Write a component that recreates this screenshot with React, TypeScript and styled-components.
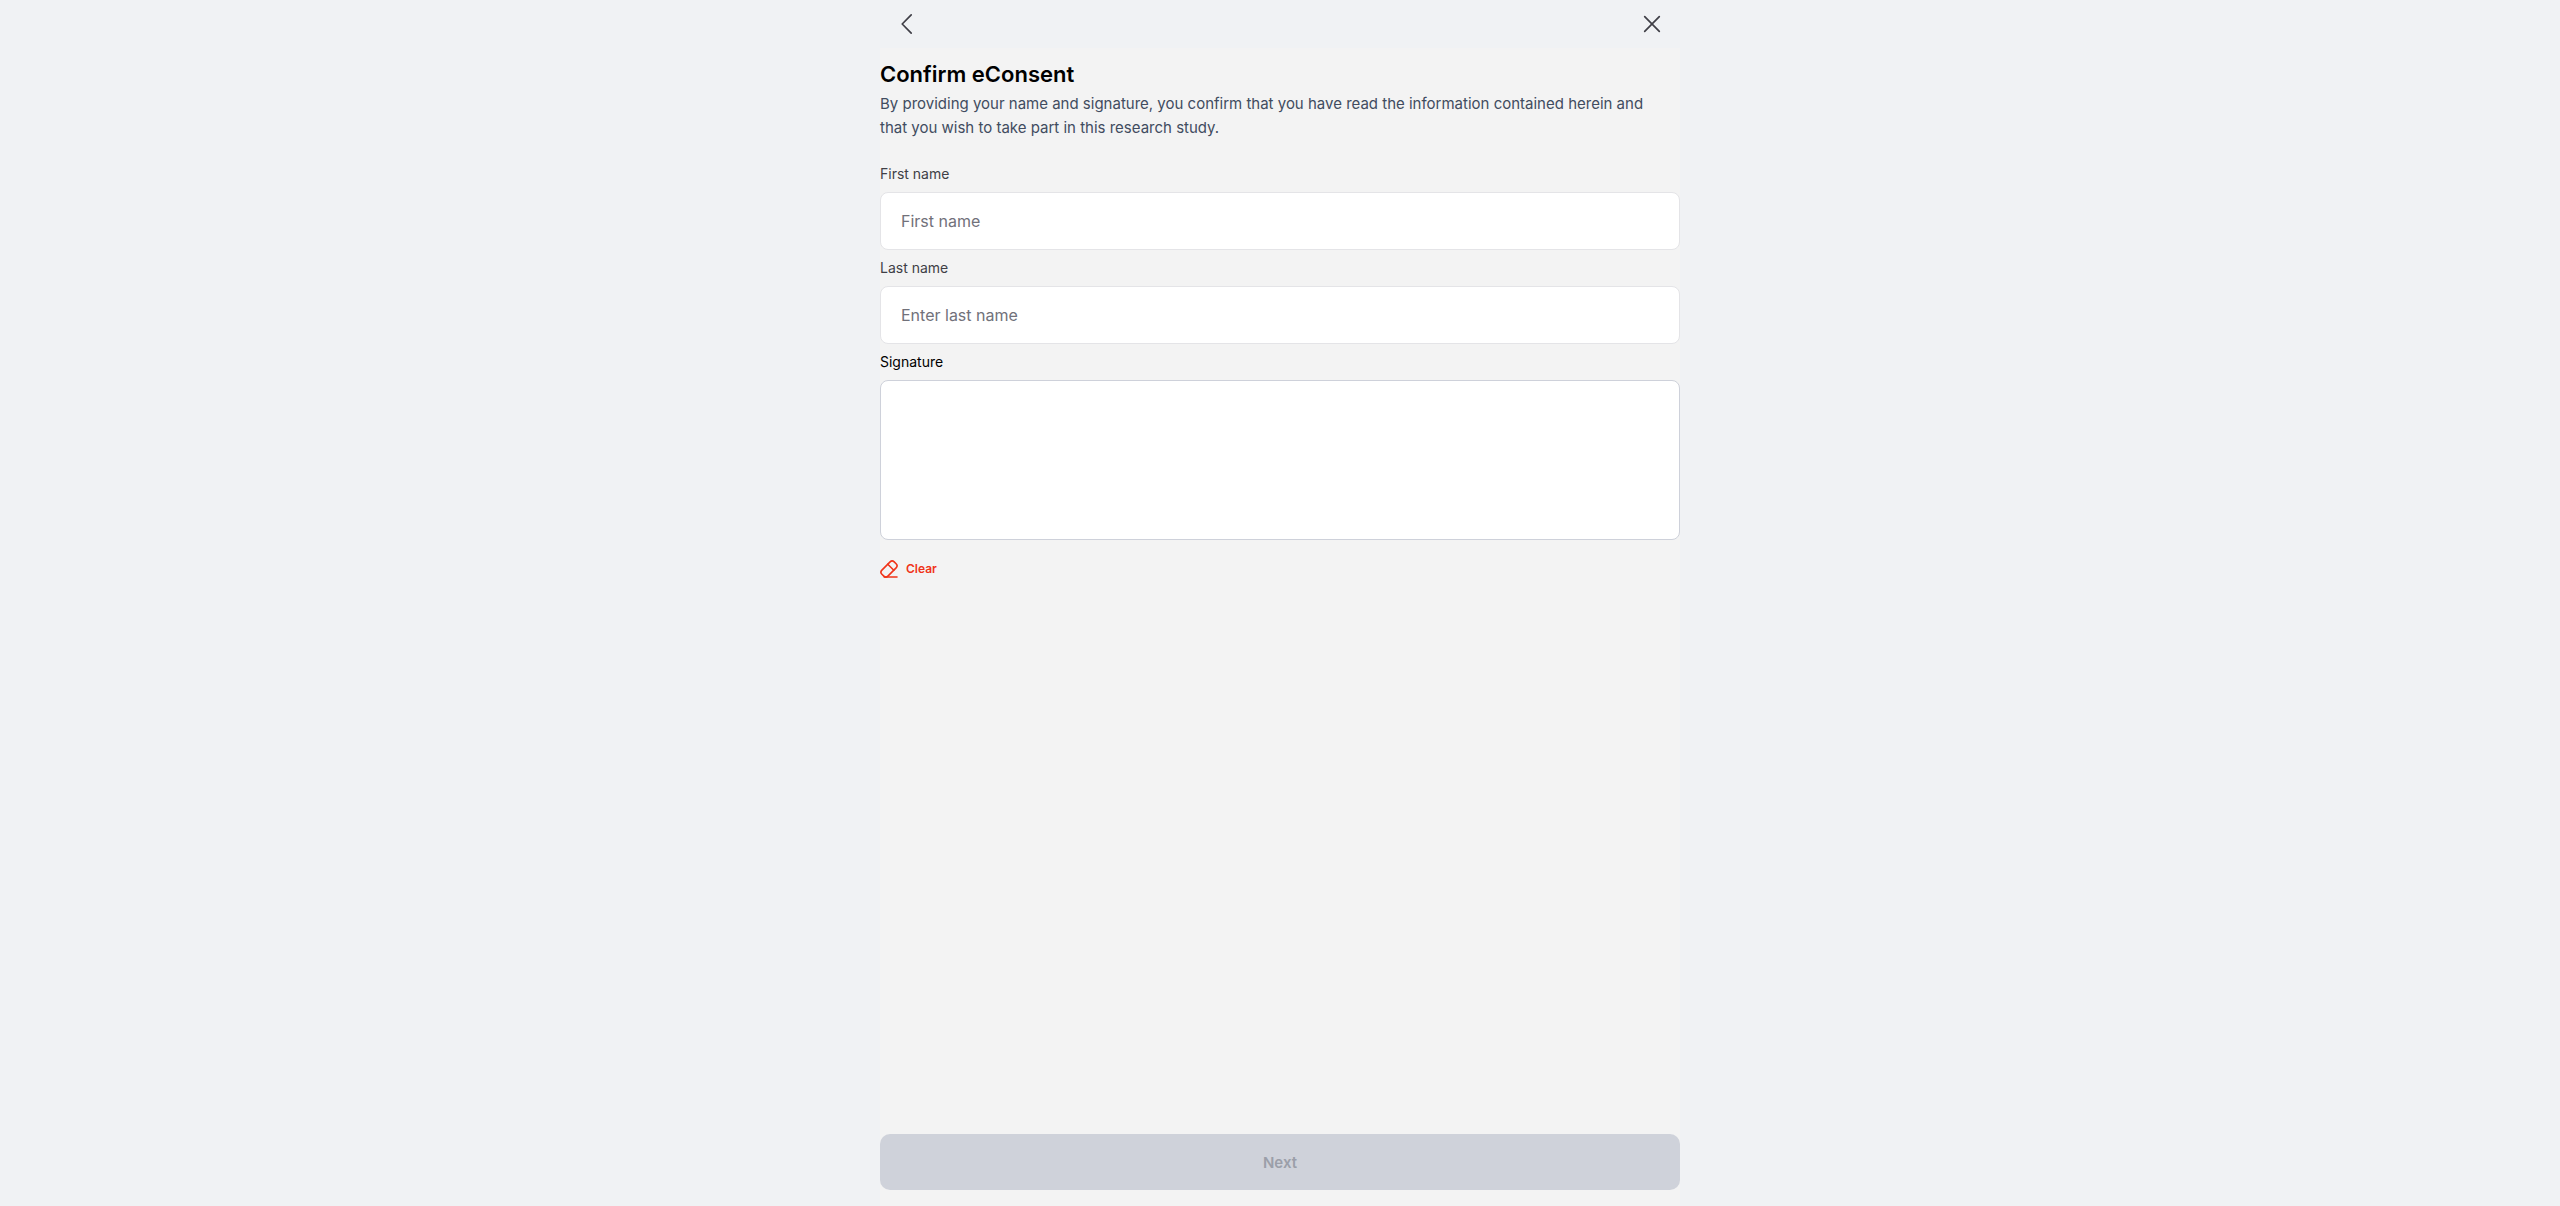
import React, { useState } from "react";
import styled, { createGlobalStyle } from "styled-components";

const GlobalStyle = createGlobalStyle`
  *, *::before, *::after { box-sizing: border-box; }
  body {
    margin: 0;
    background: #f0f2f4;
    font-family: Inter, "Liberation Sans", sans-serif;
    color: #000;
  }
`;

const Page = styled.div`
  display: flex;
  flex-direction: column;
  width: 100%;
  max-width: 800px;
  min-height: 100vh;
  margin: 0 auto;
  background: #f3f3f3;
`;

const Header = styled.header`
  display: flex;
  align-items: center;
  justify-content: space-between;
  height: 48px;
  padding: 0 16px;
  background: #f0f2f4;
`;

const IconButton = styled.button`
  display: flex;
  padding: 0;
  border: 0;
  background: none;
  color: #3f3f46;
  cursor: pointer;
`;

const Content = styled.main`
  display: flex;
  flex: 1;
  flex-direction: column;
  padding: 8px 0 16px;
`;

const Title = styled.h1`
  margin: 0;
  font-size: 22px;
  line-height: 36px;
  font-weight: 600;
`;

const Intro = styled.p`
  margin: 0 0 24px;
  padding-right: 16px;
  font-size: 15px;
  line-height: 24px;
  color: #414c60;
`;

const Form = styled.form`
  display: flex;
  flex: 1;
  flex-direction: column;
`;

const Fields = styled.div`
  display: flex;
  flex-direction: column;
  gap: 8px;
`;

const Label = styled.label<{ $strong?: boolean }>`
  font-size: 14px;
  line-height: 20px;
  color: ${(p) => (p.$strong ? "#000" : "#3f3f46")};
`;

const TextInput = styled.input`
  width: 100%;
  height: 58px;
  padding: 0 20px;
  border: 1px solid #e4e4e7;
  border-radius: 8px;
  background: #fff;
  font-family: inherit;
  font-size: 16px;
  color: #18181b;
  &::placeholder {
    color: #71717a;
    opacity: 1;
  }
`;

const SignaturePad = styled.canvas`
  display: block;
  width: 100%;
  height: 160px;
  border: 1px solid #ced1da;
  border-radius: 8px;
  background: #fff;
  touch-action: none;
`;

const ClearButton = styled.button`
  display: flex;
  align-items: center;
  align-self: flex-start;
  gap: 8px;
  margin-top: 20px;
  padding: 0;
  border: 0;
  background: none;
  font-family: inherit;
  font-size: 12px;
  line-height: 18px;
  font-weight: 600;
  color: #f03419;
  cursor: pointer;
`;

const NextButton = styled.button`
  width: 100%;
  height: 56px;
  margin-top: auto;
  border: 0;
  border-radius: 10px;
  background: #2f5bea;
  font-family: inherit;
  font-size: 15px;
  font-weight: 600;
  color: #fff;
  &:disabled {
    background: #cfd2da;
    color: #9b9fa9;
  }
`;

const strokeProps = {
  fill: "none",
  stroke: "currentColor",
  strokeLinecap: "round" as const,
  strokeLinejoin: "round" as const,
};

const BackIcon = () => (
  <svg width="24" height="24" viewBox="0 0 24 24" strokeWidth="1.7" {...strokeProps}>
    <path d="M15.2 2.8 6.2 12l9 9.2" />
  </svg>
);

const CloseIcon = () => (
  <svg width="24" height="24" viewBox="0 0 24 24" strokeWidth="1.7" {...strokeProps}>
    <path d="m4.7 4.7 14.6 14.6M19.3 4.7 4.7 19.3" />
  </svg>
);

const EraserIcon = () => (
  <svg width="18" height="18" viewBox="0 0 18 18" strokeWidth="1.6" {...strokeProps}>
    <path d="M1.9 10.1 10.1 1.9a2.9 2.9 0 0 1 4.1 0l1.9 1.9a2.9 2.9 0 0 1 0 4.1L7.9 16.1a2.9 2.9 0 0 1-4.1 0l-1.9-1.9a2.9 2.9 0 0 1 0-4.1Z" />
    <path d="m7.8 4.2 6 6M4.2 17h12.8" />
  </svg>
);

export default function App() {
  const [firstName, setFirstName] = useState("");
  const [lastName, setLastName] = useState("");
  return (
    <>
      <GlobalStyle />
      <Page>
        <Header>
          <IconButton type="button" aria-label="Back"><BackIcon /></IconButton>
          <IconButton type="button" aria-label="Close"><CloseIcon /></IconButton>
        </Header>
        <Content>
          <Title>Confirm eConsent</Title>
          <Intro>
            By providing your name and signature, you confirm that you have read the
            information contained herein and that you wish to take part in this research study.
          </Intro>
          <Form>
            <Fields>
              <Label htmlFor="first-name">First name</Label>
              <TextInput
                id="first-name"
                placeholder="First name"
                value={firstName}
                onChange={(e) => setFirstName(e.target.value)}
              />
              <Label htmlFor="last-name">Last name</Label>
              <TextInput
                id="last-name"
                placeholder="Enter last name"
                value={lastName}
                onChange={(e) => setLastName(e.target.value)}
              />
              <Label as="span" id="signature-label" $strong>Signature</Label>
              <SignaturePad role="img" aria-labelledby="signature-label" />
            </Fields>
            <ClearButton type="button"><EraserIcon />Clear</ClearButton>
            <NextButton type="submit" disabled>Next</NextButton>
          </Form>
        </Content>
      </Page>
    </>
  );
}
